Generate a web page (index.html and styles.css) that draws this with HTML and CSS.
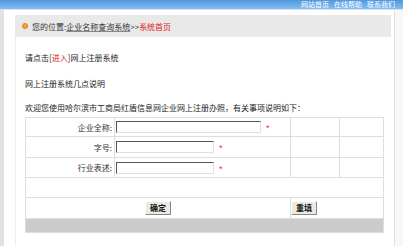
FILE: index.html
```html
<!DOCTYPE html>
<html lang="zh">
<head>
<meta charset="utf-8">
<link rel="stylesheet" href="styles.css">
</head>
<body>
<div class="top"><span>网站首页</span><span>在线帮助</span><span>联系我们</span></div>
<div class="wrap">
  <div class="gutter"></div>
  <div class="main">
    <div class="crumb"><span class="dot"></span>您的位置:<span class="u">企业名称查询系统</span>&gt;&gt;<span class="red">系统首页</span></div>
    <div class="content">
      <p class="line l1">请点击[<span class="red">进入</span>]网上注册系统</p>
      <p class="line l2">网上注册系统几点说明</p>
      <p class="line l3">欢迎您使用哈尔滨市工商局红盾信息网企业网上注册办照，有关事项说明如下：</p>
      <table class="form">
        <colgroup><col class="c1"><col class="c2"><col class="c3"><col class="c4"></colgroup>
        <tr class="r1"><td class="lab">企业全称:</td><td class="fld"><span class="inp wide"></span><span class="star">*</span></td><td></td><td></td></tr>
        <tr class="r2"><td class="lab">字号:</td><td class="fld"><span class="inp"></span><span class="star">*</span></td><td></td><td></td></tr>
        <tr class="r3"><td class="lab">行业表述:</td><td class="fld"><span class="inp"></span><span class="star">*</span></td><td></td><td></td></tr>
        <tr class="r4"><td colspan="4"></td></tr>
        <tr class="r5"><td colspan="2" class="bc"><span class="btn">确定</span></td><td colspan="2" class="bl"><span class="btn">重填</span></td></tr>
        <tr class="r6"><td colspan="4" class="grey"></td></tr>
      </table>
    </div>
  </div>
</div>
</body>
</html>
```
FILE: styles.css
```css
* { box-sizing: border-box; }
html, body { margin: 0; padding: 0; }
body {
  width: 403px;
  height: 246px;
  overflow: hidden;
  background: #fff;
  font-family: "Noto Sans CJK SC", "Noto Sans", sans-serif;
  font-size: 8px;
  color: #222;
}
.top {
  height: 10px;
  background: linear-gradient(#4f97de, #84bdee);
  border-bottom: 1px solid #d6e6f6;
  color: #fff;
  display: flex;
  justify-content: flex-end;
  gap: 5px;
  padding-right: 8px;
  line-height: 9px;
  font-size: 7px;
  overflow: hidden;
}
.wrap {
  display: flex;
  height: 236px;
  background: #f7f7f7;
}
.gutter {
  width: 4px;
  background: #e2e2e2;
}
.main {
  width: 391px;
  background: #fff;
  border-right: 1px solid #e2e2e2;
  padding: 5px 3px 0 11px;
}
.crumb {
  height: 22px;
  background: #e9e9e9;
  display: flex;
  align-items: center;
  padding-left: 7px;
  color: #333;
}
.dot {
  width: 6px;
  height: 6px;
  border-radius: 50%;
  background: #f7a04a;
  border: 1px solid #e87d1e;
  margin-right: 4px;
}
.u { text-decoration: underline; text-decoration-color: #888; }
.red { color: #e02020; }
.content {
  border-left: 1px solid #eeeeee;
  height: 209px;
  padding-left: 9px;
  padding-top: 15px;
}
.line {
  margin: 0;
  height: 12px;
  line-height: 12px;
}
.l2 { margin-top: 14px; }
.l3 { margin-top: 12px; }
.form {
  margin-top: 3px;
  width: 358px;
  border-collapse: collapse;
  border: 1px solid #d4d4d4;
  table-layout: fixed;
}
.form td {
  border: 1px solid #dedede;
  padding: 0;
}
.c1 { width: 89px; }
.c2 { width: 176px; }
.c3 { width: 49px; }
.c4 { width: 44px; }
.r1 { height: 19px; }
.r2 { height: 21px; }
.r3 { height: 20px; }
.r4 { height: 20px; }
.r5 { height: 21px; }
.r6 { height: 14px; }
.lab {
  text-align: right;
  padding-right: 2px !important;
  color: #333;
}
.fld { padding-left: 1px !important; }
.fld, .fld * { vertical-align: middle; }
.inp {
  display: inline-block;
  width: 98px;
  height: 12px;
  border: 1px solid #e0e0e0;
  border-top-color: #555;
  border-left-color: #555;
  background: #fff;
}
.inp.wide { width: 145px; }
.star {
  display: inline-block;
  margin-left: 5px;
  color: #e03a3a;
  font-family: "Liberation Sans", sans-serif;
  font-size: 9px;
  line-height: 9px;
  padding-top: 3px;
}
.bc { text-align: center; }
.bl { text-align: left; }
.btn {
  display: inline-block;
  width: 26px;
  height: 14px;
  line-height: 12px;
  text-align: center;
  background: #ebe9e2;
  border: 1px solid #888;
  border-top-color: #fff;
  border-left-color: #fff;
  color: #111;
  font-weight: bold;
  vertical-align: middle;
}
.grey { background: #cccccc; }
```
